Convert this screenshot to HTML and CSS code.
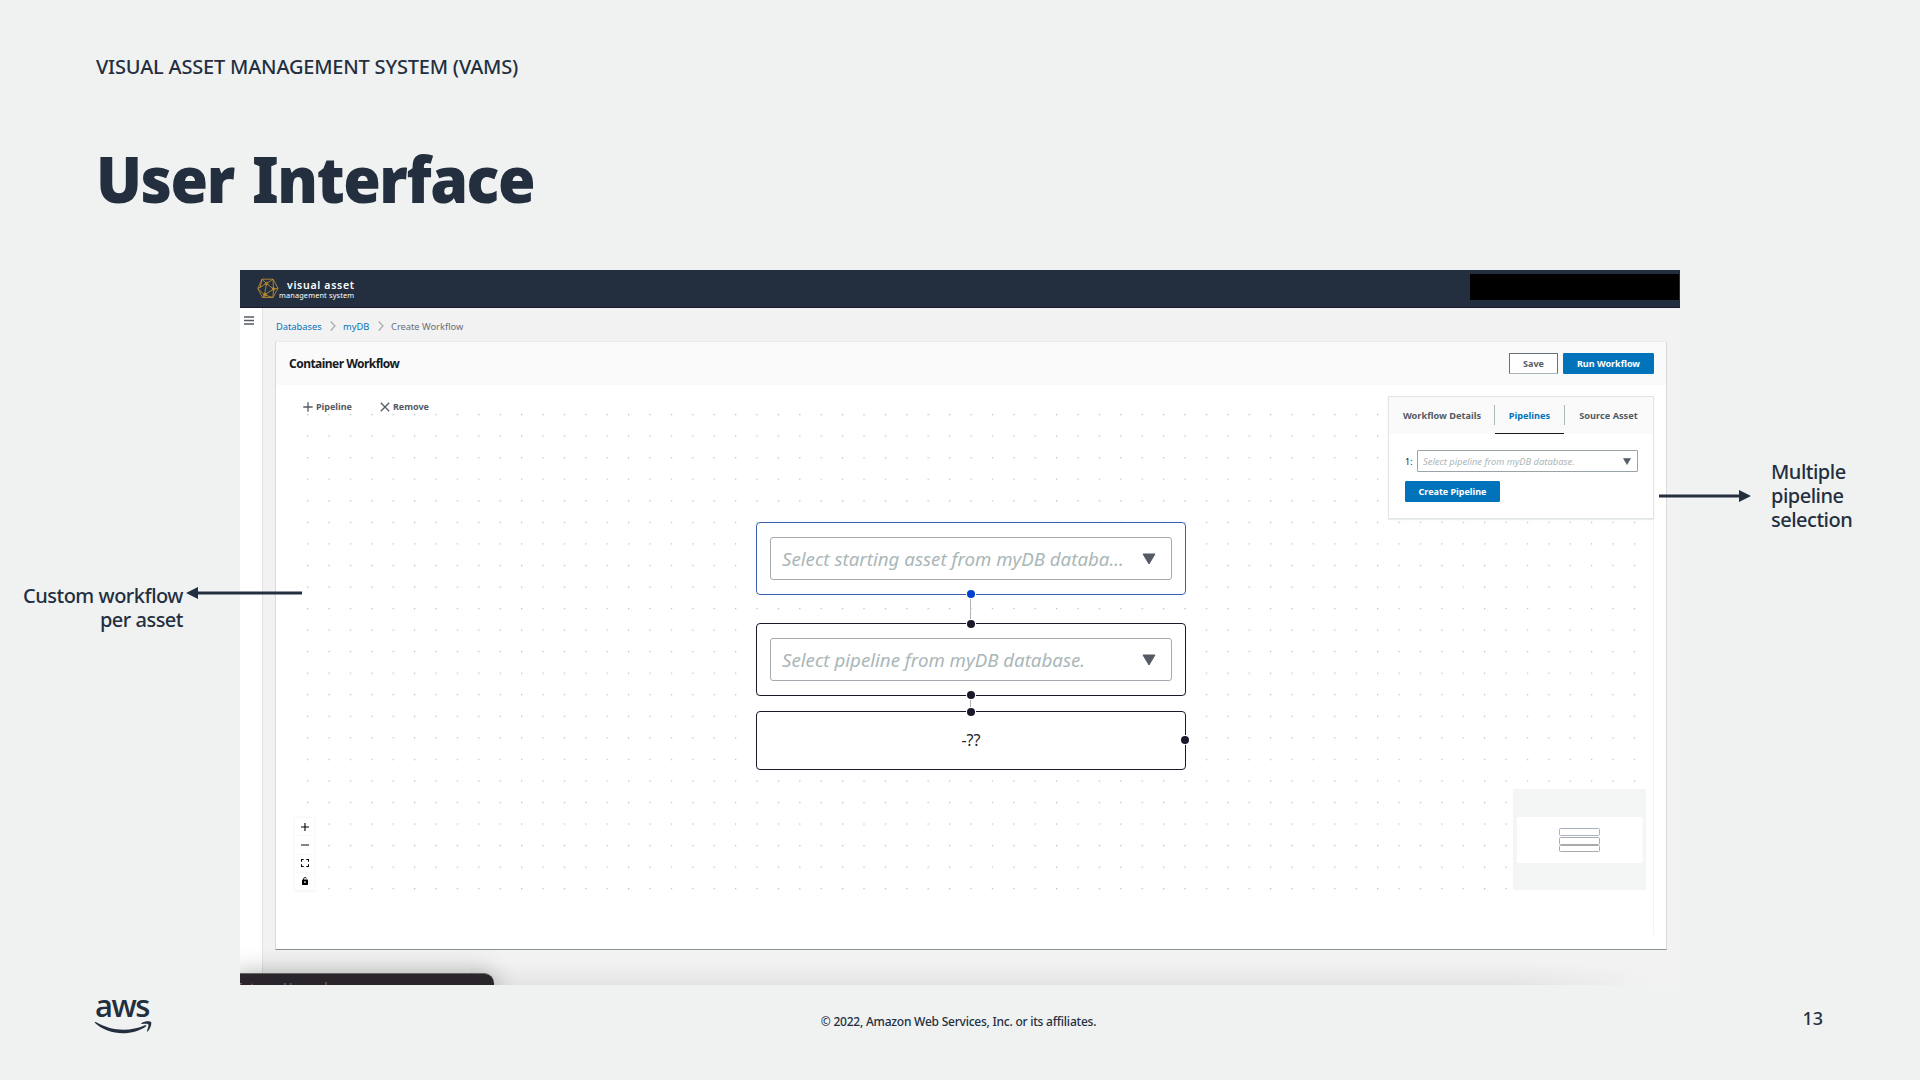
FILE: index.html
```html
<!DOCTYPE html>
<html lang="en">
<head>
<meta charset="utf-8">
<title>User Interface</title>
<link rel="stylesheet" href="styles.css">
</head>
<body>
<main class="slide">
  <p class="eyebrow"><span>VISUAL ASSET MANAGEMENT SYSTEM (VAMS)</span></p>
  <h1 class="title"><span>User Interface</span></h1>

  <section class="app">
    <header class="navbar">
      <div class="brand">
        <svg class="brand-mark" viewBox="0 0 22 21" fill="none" stroke="#c89531" stroke-width=".8">
          <path d="M5 1.2h11l5 9-5 9.300H5.500L.8 10.500z M5 1.200 9.500 5.500 16 1.200 M9.500 5.500.8 10.500 7.500 17 9.500 5.500 16.500 11 7.500 17 M16 1.200 16.500 11 21 10.200 M16.500 11 16 19.500 7.500 17 5.500 19.500 M5 1.200 3 10.200"/>
          <circle cx="9.500" cy="5.500" r="1.300"/><circle cx="16.500" cy="11" r="1.300"/><circle cx="8" cy="16.800" r="1.500"/>
        </svg>
        <div class="brand-name"><b>visual asset</b><span>management system</span></div>
      </div>
      <div class="redacted"></div>
    </header>
    <div class="shell">
      <aside class="rail"><svg width="10" height="9" viewBox="0 0 10 9" stroke="#545b64" stroke-width="1.400"><path d="M0 1h10M0 4.500h10M0 8h10"/></svg></aside>
      <div class="content">
        <nav class="crumbs">
          <a>Databases</a>
          <svg width="6" height="10" viewBox="0 0 6 10" fill="none" stroke="#a3a9ad" stroke-width="1.200"><path d="M.7.5 5 5 .7 9.500"/></svg>
          <a class="db">myDB</a>
          <svg width="6" height="10" viewBox="0 0 6 10" fill="none" stroke="#a3a9ad" stroke-width="1.200"><path d="M.7.5 5 5 .7 9.500"/></svg>
          <span>Create Workflow</span>
        </nav>
        <section class="card">
          <header class="card-head">
            <h2>Container Workflow</h2>
            <button class="btn save">Save</button>
            <button class="btn primary run">Run Workflow</button>
          </header>
          <div class="canvas">
            <svg class="dots" width="1340" height="480">
              <defs><pattern id="dot" width="21.400" height="21.550" patternUnits="userSpaceOnUse"><rect x="0.200" y="0.200" width="1" height="1" fill="#909599"/></pattern></defs>
              <rect width="1340" height="480" fill="url(#dot)"/>
            </svg>
            <div class="tools">
              <span><svg width="10" height="10" viewBox="0 0 10 10" stroke="#545b64" stroke-width="1.300"><path d="M5 .3v9.400M.3 5h9.400"/></svg><b>Pipeline</b></span>
              <span><svg width="10" height="10" viewBox="0 0 10 10" stroke="#545b64" stroke-width="1.300"><path d="M.8.8l8.400 8.400M9.200.8.800 9.200"/></svg><b>Remove</b></span>
            </div>

            <i class="edge edge-a"></i><i class="edge edge-b"></i>
            <div class="node node-source"><div class="select"><em class="s1">Select starting asset from myDB databa...</em><svg width="14" height="12" viewBox="0 0 14 12"><path d="M1 1h12L7 11z" fill="#545b64" stroke="#545b64" stroke-linejoin="round"/></svg></div><i class="port south"></i></div>
            <div class="node node-step"><div class="select"><em class="s2">Select pipeline from myDB database.</em><svg width="14" height="12" viewBox="0 0 14 12"><path d="M1 1h12L7 11z" fill="#545b64" stroke="#545b64" stroke-linejoin="round"/></svg></div><i class="port north"></i><i class="port south"></i></div>
            <div class="node node-end"><span>-??</span><i class="port north"></i><i class="port east"></i></div>

            <aside class="panel">
              <div class="tabs"><span class="tab t1"><b>Workflow Details</b></span><span class="tab t2 active"><b>Pipelines</b></span><span class="tab t3"><b>Source Asset</b></span></div>
              <div class="panel-body">
                <div class="row"><span class="num">1:</span><div class="mini-select"><em>Select pipeline from myDB database.</em><svg width="8" height="7" viewBox="0 0 8 7"><path d="M.5.500h7L4 6.500z" fill="#545b64" stroke="#545b64" stroke-width=".6"/></svg></div></div>
                <button class="btn primary create">Create Pipeline</button>
              </div>
            </aside>

            <div class="controls">
              <span><svg width="8" height="8" viewBox="0 0 8 8" stroke="#000" stroke-width="1.100"><path d="M4 0v8M0 4h8"/></svg></span>
              <span><svg width="8" height="8" viewBox="0 0 8 8" stroke="#333" stroke-width="1.200"><path d="M0 4h8"/></svg></span>
              <span><svg width="8" height="8" viewBox="0 0 8 8" fill="none" stroke="#000" stroke-width="1.100"><path d="M.5 2.700V.5h2.200M5.300.5h2.200v2.200M7.500 5.300v2.200H5.300M2.700 7.500H.5V5.300"/></svg></span>
              <span><svg width="8" height="8" viewBox="0 0 8 8"><path d="M2.500 3V2q0-1.500 1.500-1.500T5.500 1.500" fill="none" stroke="#000" stroke-width=".8"/><rect x="1" y="2.500" width="6" height="5.500" rx=".8"/><circle cx="4" cy="5.100" r=".9" fill="#fff"/></svg></span>
            </div>
            <svg class="minimap" width="133" height="101" viewBox="0 0 133 101">
              <rect width="133" height="101" fill="#f4f5f5"/><rect x="4" y="28" width="125.500" height="46" fill="#fff"/>
              <g fill="#fff"><rect x="46.500" y="39.500" width="40" height="7" rx="1" stroke="#a5b2c4"/><rect x="46.500" y="48.500" width="40" height="7" rx="1" stroke="#aaa"/><rect x="46.500" y="56.500" width="40" height="6" rx="1" stroke="#aaa"/></g>
            </svg>
            <i class="guide"></i>
          </div>
        </section>
      </div>
    </div>
    <i class="shade"></i>
    <div class="popup"><span>Interax Upgrade</span></div>
  </section>

  <div class="note note-left">Custom workflow<br>per asset</div>
  <svg class="arrow arrow-left" width="116" height="14" viewBox="0 0 116 14"><path d="M10 7h106" stroke="#232f3e" stroke-width="3"/><path d="M0 7 12 1v12z" fill="#232f3e"/></svg>
  <svg class="arrow arrow-right" width="92" height="14" viewBox="0 0 92 14"><path d="M0 7h82" stroke="#232f3e" stroke-width="3"/><path d="M92 7 80 1v12z" fill="#232f3e"/></svg>
  <div class="note note-right">Multiple<br>pipeline<br>selection</div>

  <footer class="footer">
    <div class="aws"><span>aws</span><svg width="58" height="14" viewBox="0 0 58 14" fill="#232f3e"><path d="M.5 1.600Q1 .6 2.300 1.300C18 10.500 36 10.800 51 4.300q2-.6 1.200 1C38 15.600 14 14.800.5 1.600z"/><path d="M47.500 2.300C50.500-.1 56 0 57 1c1 1.300-.5 6.500-3 9.200-.8.700-1.300.3-.9-.6 1-2.600 1.800-5.300 1.200-6.200-.7-.9-3.500-.7-6-.4-1 .1-1.300-.3-.8-.7z"/></svg></div>
    <p class="legal"><span>© 2022, Amazon Web Services, Inc. or its affiliates.</span></p>
    <p class="page"><span>13</span></p>
  </footer>
</main>
</body>
</html>
```
FILE: styles.css
```css
* { box-sizing: border-box; }
body { margin: 0; font-family: "Noto Sans", "Open Sans", sans-serif; color: #232f3e; }
p, h1, h2 { margin: 0; }
i { display: block; }
svg { display: block; flex: none; }
button { font: inherit; margin: 0; }
.slide { position: relative; width: 1920px; height: 1080px; overflow: hidden; background: #f0f2f2; display: flex; flex-direction: column; white-space: nowrap; }
.eyebrow { height: 134px; padding: 53px 0 0 96px; font-size: 20px; line-height: 28px; font-weight: 500; letter-spacing: -0.2px; }
.title { height: 136px; padding: 3px 0 0 96px; font-size: 64px; line-height: 84px; font-weight: 900; letter-spacing: -1.5px; word-spacing: 4px; }
.title span { display: inline-block; transform: scaleX(.95); transform-origin: 0 50%; }

.app { position: relative; width: 1440px; height: 715px; margin-left: 240px; overflow: hidden; display: flex; flex-direction: column; background: #f2f2f2; }
.navbar { flex: none; height: 38px; background: #232f3e; border-bottom: 1px solid #1a1a2d; display: flex; justify-content: space-between; padding: 4px 1px 0 17px; }
.brand { display: flex; color: #fff; padding-top: 4px; }
.brand-mark { width: 22px; height: 21px; }
.brand-name { display: flex; flex-direction: column; }
.brand-name b { padding-left: 8px; font-size: 10.500px; line-height: 14px; font-weight: 600; letter-spacing: .7px; }
.brand-name span { font-size: 7.300px; line-height: 7px; letter-spacing: .17px; }
.redacted { width: 209px; height: 26px; background: #000; }
.shell { flex: 1; display: flex; }
.rail { width: 23px; background: #fff; border-right: 1px solid #e2e3e5; padding: 8px 0 0 4px; }
.content { flex: 1; padding: 0 13px 35px 12px; display: flex; flex-direction: column; }
.crumbs { height: 33px; padding: 3px 0 0 1px; display: flex; align-items: center; font-size: 9.300px; color: #687078; }
.crumbs a { color: #0073bb; width: 46px; margin-right: 8px; }
.crumbs .db { width: 27px; margin-left: 7px; }
.crumbs span { margin-left: 7px; }
.card { height: 609px; background: #fff; border: 1px solid #d5dbdb; border-top-color: #eaeded; border-bottom-color: #879196; display: flex; flex-direction: column; }
.card-head { height: 43px; background: #fafafa; display: flex; align-items: center; padding: 0 12px 0 13px; }
.card-head h2 { flex: 1; font-size: 12px; font-weight: 700; color: #16191f; letter-spacing: -.53px; }
.btn { height: 21px; padding: 0; border: 1px solid #687078; border-radius: 1px; background: #fff; color: #545b64; font-size: 9px; line-height: 19px; font-weight: 700; text-align: center; }
.primary { background: #0073bb; border-color: #0073bb; color: #fff; }
.save { width: 49px; margin-right: 5px; border-bottom-color: #aab7b8; }
.run { width: 91px; }
.create { display: block; width: 95px; }
.canvas { position: relative; flex: 1; }
.dots { position: absolute; left: 31px; top: 29px; }
.tools { display: flex; gap: 28px; padding: 15px 0 0 27px; font-size: 9px; line-height: 14px; color: #545b64; }
.tools span { display: flex; align-items: center; gap: 3px; }
.tools b { font-weight: 700; }

.node { position: absolute; left: 480px; width: 430px; height: 73px; background: #fff; border: 1.500px solid #1a192b; border-radius: 4px; padding: 14px 13px; font-size: 16px; text-align: center; color: #222; }
.node-source { top: 137px; border-color: #3a5fae; }
.node-step { top: 238px; }
.node-end { top: 326px; height: 59px; line-height: 29px; }
.select { height: 43px; border: 1px solid #a5abb1; border-radius: 3px; padding: 0 15px 0 11px; display: flex; align-items: center; justify-content: space-between; color: #aab7b8; font-size: 18.700px; }
.port { position: absolute; width: 8px; height: 8px; border-radius: 50%; background: #1a192b; box-shadow: 0 0 0 1px #fff; }
.south { left: 209.500px; bottom: -4px; }
.north { left: 209.500px; top: -4px; }
.east { right: -4px; top: 24px; }
.node-source .port { background: #0041d0; }
.edge { position: absolute; left: 694px; width: 1px; background: #b1b1b7; }
.edge-a { top: 210px; height: 28px; }
.edge-b { top: 311px; height: 15px; }

.panel { position: absolute; left: 1112px; top: 11px; width: 266px; height: 123px; background: #fff; border: 1px solid #e1e4e4; box-shadow: 0 1px 1px #eaeded; }
.tabs { display: flex; align-items: center; height: 37px; background: #fafafa; font-size: 9.200px; color: #545b64; }
.tab { height: 100%; display: flex; align-items: center; justify-content: center; border-bottom: 1px solid transparent; }
.t1 { width: 106px; } .t2 { width: 69px; } .t3 { width: 89px; }
.tab.active { position: relative; color: #0073bb; border-bottom: 1px solid #16191f; }
.tab.active::before, .tab.active::after { content: ""; position: absolute; top: 8px; height: 20px; width: 1px; background: #aab7b8; left: -1px; }
.tab.active::after { left: auto; right: -1px; }
.panel-body { padding: 16px 15px 0 16px; }
.row { display: flex; align-items: center; margin-bottom: 9px; }
.num { width: 12px; font-size: 9px; color: #16191f; }
.mini-select { flex: 1; height: 22px; border: 1px solid #9aa3a7; border-radius: 1px; display: flex; align-items: center; justify-content: space-between; padding: 0 6px 0 5px; color: #aab7b8; font-size: 9.350px; }

.controls { position: absolute; left: 19px; top: 433px; width: 19px; height: 73px; background: #fff; box-shadow: 0 0 2px 1px rgba(0,0,0,.04); display: flex; flex-direction: column; }
.controls span { flex: 1; display: flex; align-items: center; justify-content: center; border-bottom: 1px solid #f7f7f7; }
.minimap { position: absolute; left: 1237px; top: 404px; }
.guide { position: absolute; right: 12px; top: 134px; width: 1px; height: 416px; background: #f2f3f3; }
.shade { position: absolute; left: 230px; right: 25px; bottom: 0; height: 22px; background: linear-gradient(rgba(0,0,0,0), rgba(0,0,0,.055)); mask-image: linear-gradient(90deg, #000 88%, transparent); }
.popup { position: absolute; left: -8px; bottom: -18px; width: 262px; height: 30px; background: #2a252b; border-top: 1px solid #646464; border-radius: 0 10px 0 0; box-shadow: 0 0 24px rgba(0,0,0,.3); color: #77727a; font-size: 12.500px; line-height: 13px; padding: 7px 0 0 6px; }

.note { position: absolute; font-size: 20px; line-height: 24px; font-weight: 500; letter-spacing: -.5px; }
.note-left { right: 1737px; top: 584px; text-align: right; }
.note-right { left: 1771px; top: 460px; }
.arrow { position: absolute; }
.arrow-left { left: 186px; top: 586px; }
.arrow-right { left: 1659px; top: 489px; }

.footer { flex: 1; display: grid; grid-template-columns: 200px 1fr 200px; padding: 0 97px 0 94px; }
.aws { padding-top: 5px; }
.aws span { display: block; padding-left: 1px; font-family: "Open Sans", sans-serif; font-size: 31px; line-height: 30px; font-weight: 600; letter-spacing: -1.5px; }
.aws svg { margin-top: 1px; }
.legal { text-align: center; font-size: 12px; line-height: 18px; font-weight: 500; letter-spacing: -.23px; padding-top: 28px; }
.page { text-align: right; font-size: 18px; line-height: 24px; font-weight: 500; padding-top: 21px; }
```
